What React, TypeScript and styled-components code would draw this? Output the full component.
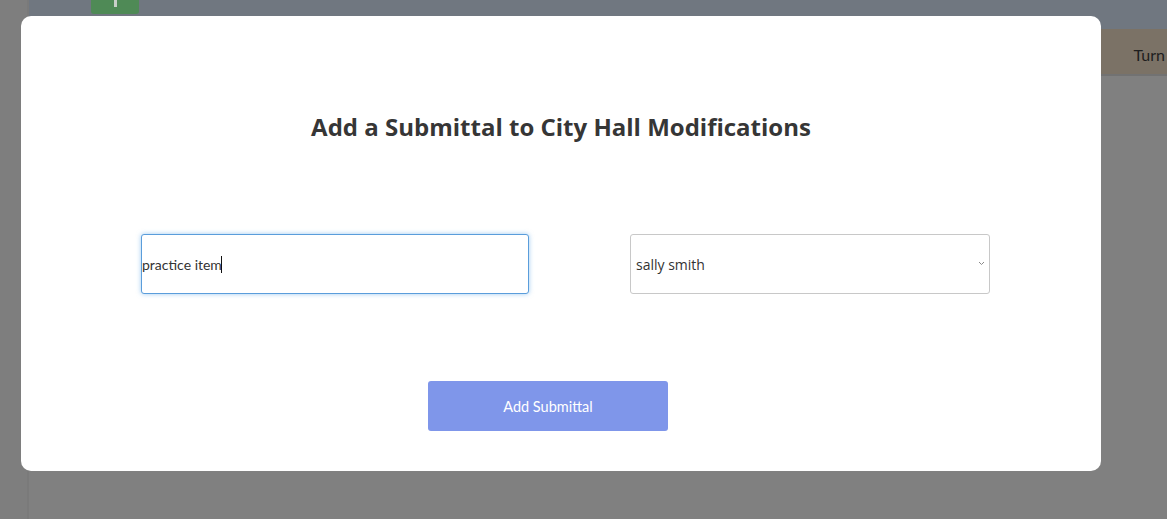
import React from "react";
import styled, { createGlobalStyle } from "styled-components";

const Global = createGlobalStyle`
  html, body { margin: 0; padding: 0; }
  body { width: 1167px; height: 519px; overflow: hidden; background: #808080; font-family: "Open Sans", "Liberation Sans", sans-serif; }
  #root { width: 100%; height: 100%; }
`;

const Page = styled.div`
  display: flex;
  width: 1167px;
  height: 519px;
  background: #808080;
`;

const Sidebar = styled.aside`
  width: 27px;
  flex: none;
  background: #7e7e7e;
  border-right: 2px solid #7a7a7a;
`;

const Main = styled.div`
  flex: 1;
  display: flex;
  flex-direction: column;
`;

const TopBar = styled.header`
  height: 29px;
  background: #707780;
  display: flex;
  padding-left: 62px;
`;

const GreenTab = styled.div`
  width: 48px;
  height: 14px;
  background: #4f8a56;
  border-radius: 0 0 3px 3px;
  display: flex;
  justify-content: center;
`;

const TabMark = styled.span`
  width: 3px;
  height: 7px;
  background: #c9cfc9;
`;

const SubBar = styled.div`
  height: 45px;
  background: #7b7266;
  border-bottom: 2px solid #727272;
  display: flex;
  justify-content: flex-end;
  align-items: center;
`;

const SubBarText = styled.span`
  font-family: "Lato", "Liberation Sans", sans-serif;
  font-size: 16px;
  color: #1e1e1e;
  margin-right: 2px;
  margin-top: 6px;
`;

const Overlay = styled.div`
  position: fixed;
  inset: 0;
  display: flex;
  align-items: flex-start;
  padding: 16px 0 0 21px;
`;

const Modal = styled.div`
  width: 1080px;
  height: 455px;
  background: #fff;
  border-radius: 10px;
  box-sizing: border-box;
  display: flex;
  flex-direction: column;
  padding-top: 95px;
`;

const Title = styled.h2`
  margin: 0;
  text-align: center;
  font-family: "Open Sans", "Liberation Sans", sans-serif;
  font-weight: 700;
  font-size: 24px;
  line-height: 32px;
  color: #363636;
`;

const FieldRow = styled.div`
  display: flex;
  align-items: center;
  padding-left: 120px;
  gap: 101px;
  margin-top: 91px;
`;

const InputWrap = styled.div`
  position: relative;
  width: 388px;
  height: 60px;
`;

const TextInput = styled.input`
  width: 100%;
  height: 100%;
  box-sizing: border-box;
  border: 1px solid #5a9ddb;
  border-radius: 3px;
  box-shadow: 0 0 5px rgba(80, 160, 230, 0.55);
  outline: none;
  padding: 0;
  font-family: "Lato", "Liberation Sans", sans-serif;
  font-size: 14px;
  color: #333;
  caret-color: transparent;
  background: #fff;
`;

const Caret = styled.span`
  position: absolute;
  left: 80px;
  top: 22px;
  width: 1px;
  height: 17px;
  background: #111;
  pointer-events: none;
`;

const SelectWrap = styled.div`
  position: relative;
  width: 360px;
  height: 60px;
`;

const Select = styled.select`
  appearance: none;
  width: 100%;
  height: 100%;
  box-sizing: border-box;
  border: 1px solid #c8c8c8;
  border-radius: 3px;
  padding: 0 0 0 5px;
  background: #fff;
  font-family: "Open Sans", "Liberation Sans", sans-serif;
  font-size: 14px;
  color: #333;
  outline: none;
`;

const Chevron = styled.svg`
  position: absolute;
  right: 5px;
  top: 27px;
  pointer-events: none;
`;

const ButtonRow = styled.div`
  display: flex;
  padding-left: 407px;
  margin-top: 87px;
`;

const SubmitButton = styled.button`
  width: 240px;
  height: 50px;
  border: none;
  border-radius: 3px;
  background: #7f96ea;
  color: #fff;
  font-family: "Lato", "Liberation Sans", sans-serif;
  font-size: 14.5px;
  cursor: pointer;
`;

export default function App() {
  return (
    <>
      <Global />
      <Page>
        <Sidebar />
        <Main>
          <TopBar>
            <GreenTab>
              <TabMark />
            </GreenTab>
          </TopBar>
          <SubBar>
            <SubBarText>Turn</SubBarText>
          </SubBar>
        </Main>
      </Page>
      <Overlay>
        <Modal>
          <Title>Add a Submittal to City Hall Modifications</Title>
          <FieldRow>
            <InputWrap>
              <TextInput defaultValue="practice item" />
              <Caret />
            </InputWrap>
            <SelectWrap>
              <Select defaultValue="sally smith">
                <option value="sally smith">sally smith</option>
              </Select>
              <Chevron width="7" height="5" viewBox="0 0 7 5">
                <path d="M1 1 L3.5 3.5 L6 1" fill="none" stroke="#8a8a8a" strokeWidth="1" />
              </Chevron>
            </SelectWrap>
          </FieldRow>
          <ButtonRow>
            <SubmitButton>Add Submittal</SubmitButton>
          </ButtonRow>
        </Modal>
      </Overlay>
    </>
  );
}
